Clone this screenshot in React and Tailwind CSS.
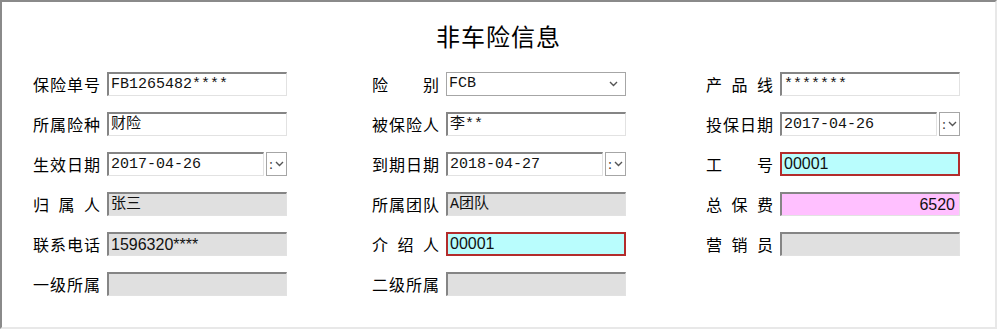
const cjk = { fontFamily: '"Noto Sans CJK SC", sans-serif' };
const mono = { fontFamily: '"Liberation Mono", "Noto Sans CJK SC", monospace', fontSize: "15px" };
const sans = { fontFamily: '"Liberation Sans", "Noto Sans CJK SC", sans-serif', fontSize: "16px" };

function Label({ text }) {
  const chars = text.split("");
  return (
    <div
      className="w-[67px] h-[24px] flex items-center justify-between text-[16px] text-black shrink-0"
      style={cjk}
    >
      {chars.map((c, i) => (
        <span key={i}>{c}</span>
      ))}
    </div>
  );
}

function Chevron() {
  return (
    <svg width="9" height="6" viewBox="0 0 9 6">
      <path d="M1 1 L4.5 4.5 L8 1" stroke="#555" strokeWidth="1.4" fill="none" />
    </svg>
  );
}

// sunken text box, variants: white / gray / pink / cyan(red border)
function Box({ value = "", variant = "white", width = "w-[180px]", font = mono, align = "left" }) {
  let cls = "border-t-2 border-l-2 border-t-[#858585] border-l-[#858585] border-b border-r border-b-[#e2e2e2] border-r-[#e2e2e2]";
  let bg = "bg-white";
  if (variant === "gray") bg = "bg-[#e0e0e0]";
  if (variant === "pink") bg = "bg-[#ffc0ff]";
  if (variant === "cyan") {
    bg = "bg-[#b9fdfd]";
    cls = "border-2 border-[#b32c2c]";
  }
  return (
    <div
      className={`${width} h-[24px] ${bg} ${cls} flex items-center text-[#111] leading-none overflow-hidden shrink-0 ${
        align === "right" ? "justify-end pr-[4px]" : "pl-[2px]"
      }`}
      style={font}
    >
      {value}
    </div>
  );
}

function Select({ value }) {
  return (
    <div
      className="w-[180px] h-[24px] bg-white border border-[#a6a6a6] flex items-center justify-between pl-[2px] pr-[7px] text-[#111] shrink-0"
      style={mono}
    >
      <span>{value}</span>
      <Chevron />
    </div>
  );
}

function DateField({ value }) {
  return (
    <div className="w-[180px] h-[24px] flex items-center gap-[2px] shrink-0">
      <Box value={value} width="w-[157px]" />
      <div className="w-[21px] h-[24px] border border-[#a6a6a6] bg-white flex items-center justify-center gap-[2px] text-[13px] text-[#333]">
        <span className="leading-none">:</span>
        <Chevron />
      </div>
    </div>
  );
}

function Field({ label, children, w }) {
  return (
    <div className={`${w} flex items-center gap-[7px]`}>
      <Label text={label} />
      {children}
    </div>
  );
}

export default function App() {
  const rows = [
    [
      ["保险单号", <Box value="FB1265482****" />],
      ["险别", <Select value="FCB" />],
      ["产品线", <Box value="*******" />],
    ],
    [
      ["所属险种", <Box value="财险" />],
      ["被保险人", <Box value="李**" />],
      ["投保日期", <DateField value="2017-04-26" />],
    ],
    [
      ["生效日期", <DateField value="2017-04-26" />],
      ["到期日期", <DateField value="2018-04-27" />],
      ["工号", <Box value="00001" variant="cyan" font={sans} />],
    ],
    [
      ["归属人", <Box value="张三" variant="gray" />],
      ["所属团队", <Box value="A团队" variant="gray" />],
      ["总保费", <Box value="6520" variant="pink" font={sans} align="right" />],
    ],
    [
      ["联系电话", <Box value="1596320****" variant="gray" font={sans} />],
      ["介绍人", <Box value="00001" variant="cyan" font={sans} />],
      ["营销员", <Box value="" variant="gray" />],
    ],
    [
      ["一级所属", <Box value="" variant="gray" />],
      ["二级所属", <Box value="" variant="gray" />],
      null,
    ],
  ];

  const widths = ["w-[339px]", "w-[334px]", "w-[260px]"];

  return (
    <div className="w-[1000px] h-[330px] bg-white">
      <div className="w-[997px] h-[329px] bg-white border-t-2 border-l-2 border-t-[#8a8a8a] border-l-[#8a8a8a] border-r-2 border-b-2 border-r-[#e8e8e8] border-b-[#e8e8e8]">
        <div
          className="h-[70px] flex items-center justify-center pb-[3px] text-[24px] font-normal text-black tracking-[1px]"
          style={cjk}
        >
          非车险信息
        </div>
        <div className="flex flex-col gap-[16px] pl-[31px]">
          {rows.map((row, i) => (
            <div key={i} className="flex h-[24px]">
              {row.map((cell, j) =>
                cell ? (
                  <Field key={j} label={cell[0]} w={widths[j]}>
                    {cell[1]}
                  </Field>
                ) : (
                  <div key={j} className={widths[j]} />
                )
              )}
            </div>
          ))}
        </div>
      </div>
    </div>
  );
}
